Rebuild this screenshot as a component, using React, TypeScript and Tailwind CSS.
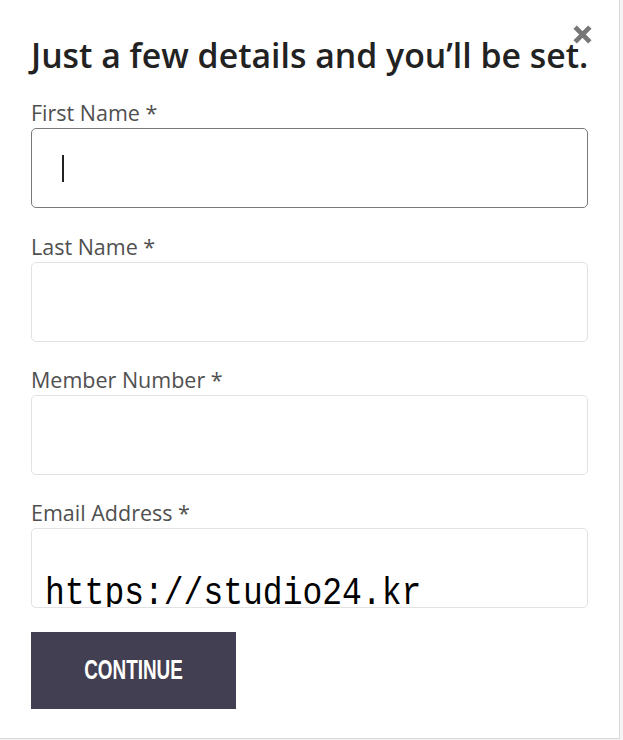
import { JSX } from "react";

interface FieldProps {
  label: string;
  active?: boolean;
  className?: string;
  children?: React.ReactNode;
}

function Field({ label, active, className, children }: FieldProps): JSX.Element {
  return (
    <div className={`flex flex-col ${className ?? ""}`}>
      <label className="text-[21.5px] leading-[24px] text-[#505050]">
        {label} *
      </label>
      <div
        className={`relative mt-[3px] h-[80px] w-[557px] overflow-hidden rounded-[5px] border bg-white ${
          active ? "border-[#7a7a7a]" : "border-[#e2e2e2]"
        }`}
      >
        {children}
      </div>
    </div>
  );
}

export default function App(): JSX.Element {
  return (
    <div className="relative h-[740px] w-[623px] overflow-hidden bg-[#f4f4f4] font-['Open_Sans','Lato',sans-serif]">
      <div className="relative h-[739px] w-[620px] border-r border-b border-[#d9d9d9] bg-white pl-[31px]">
        {/* close */}
        <button className="absolute left-[572px] top-[24px] flex h-[21px] w-[21px] items-center justify-center">
          <svg viewBox="0 0 20 20" className="h-[21px] w-[21px]">
            <path
              d="M3 3 L17 17 M17 3 L3 17"
              stroke="#777"
              strokeWidth="4.6"
              strokeLinecap="butt"
            />
          </svg>
        </button>

        <h1 className="pt-[33px] text-[33.8px] leading-[44px] font-semibold text-[#222]">
          Just a few details and you’ll be set.
        </h1>

        <div className="mt-[24px] flex flex-col gap-[26px]">
          <Field label="First Name" active className="mb-[1px]">
            <span className="absolute left-[30px] top-[26px] h-[27px] w-[2px] bg-[#222]" />
          </Field>
          <Field label="Last Name" />
          <Field label="Member Number" />
          <Field label="Email Address">
            <span className="absolute left-[13px] top-[49px] origin-bottom scale-y-[1.17] font-['Liberation_Mono',monospace] text-[33px] leading-[40px] text-black">
              https://studio24.kr
            </span>
          </Field>
        </div>

        <button className="mt-[24px] flex h-[77px] w-[205px] items-center justify-center bg-[#433f52]">
          <span className="origin-center scale-x-[0.7] font-['Liberation_Sans_Narrow','Liberation_Sans',sans-serif] text-[27px] font-bold text-white">
            CONTINUE
          </span>
        </button>
      </div>
    </div>
  );
}
